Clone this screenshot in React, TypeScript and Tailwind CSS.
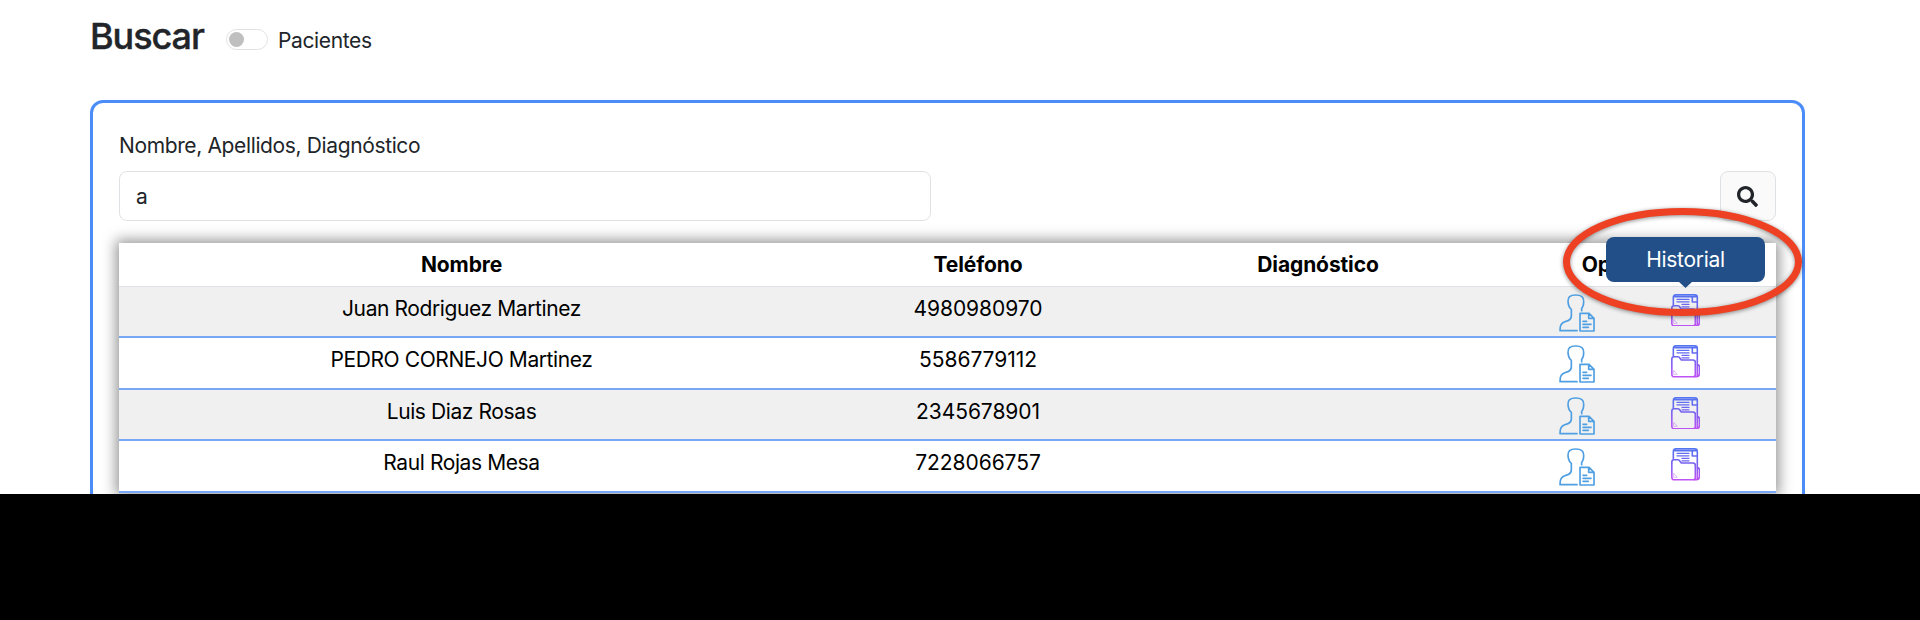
import { FaSearch } from "react-icons/fa";

const patients = [
  { name: "Juan Rodriguez Martinez", phone: "4980980970" },
  { name: "PEDRO CORNEJO Martinez", phone: "5586779112" },
  { name: "Luis Diaz Rosas", phone: "2345678901" },
  { name: "Raul Rojas Mesa", phone: "7228066757" },
];

const columns = "grid grid-cols-[685px_348px_332px_292px]";

function PatientIcon() {
  return (
    <svg viewBox="0 0 110 114" className="h-[38px] w-[36.7px]" fill="none" stroke="#4f9fe2" strokeWidth="5" strokeLinecap="round" strokeLinejoin="round">
      <path d="M68 50 V43 C74 37 74 30 74 22 C75 9 67 3 50 3 C33 3 26 10 27 23 C28 34 31 42 37 46 V66 C37 74 34 77 27 80 C14 84 6 87 4 98 L3 110 H54" />
      <path d="M63 58 H90 L105 73 V111 H63 Z M89 58 V73 H105 M72 82 H83 M72 91 H96 M72 100 H88" />
    </svg>
  );
}

function HistoryIcon({ id }: { id: string }) {
  return (
    <svg viewBox="0 0 88 98" className="h-[32.7px] w-[29.3px]" fill="none" stroke={`url(#${id})`} strokeWidth="4.8" strokeLinecap="round" strokeLinejoin="round">
      <defs>
        <linearGradient id={id} gradientUnits="userSpaceOnUse" x1="0" y1="0" x2="0" y2="98">
          <stop offset="0" stopColor="#5375f2" />
          <stop offset="0.45" stopColor="#7461ef" />
          <stop offset="1" stopColor="#c352f5" />
        </linearGradient>
      </defs>
      <path d="M7 33 V11 Q7 2.5 15 2.5 H71 Q79 2.5 79 10 V57 M12 8 H76 M64 9 V24 H79" />
      <path d="M18 16 H54 M18 23.5 H54 M33 31 H54 M33 38.5 H54" strokeWidth="4" />
      <path d="M9 35 H21 Q25 35 27 40 L31 45 H66 Q73 45 73 52 V89 Q73 95.5 66 95.5 H10 Q2.5 95.5 2.5 88 V42 Q2.5 35 9 35 Z" />
      <path d="M79 59 Q85.5 59 85.5 66 V85 Q85.5 95 77 95 H70 M79 59 V92" />
      <path d="M9 77 L19 88 H9 Z" strokeWidth="2" opacity="0.6" />
    </svg>
  );
}

export default function App() {
  return (
    <div className="h-[620px] w-[1920px] overflow-hidden bg-black font-['Inter','Liberation_Sans',sans-serif] text-[21px] text-[#212529]">
      <div className="h-[494px] overflow-hidden bg-white">
        <header className="flex h-[100px] items-start pl-[90px]">
          <h1 className="mt-[14px] w-[136px] text-[36px] leading-[44px] font-medium tracking-[-1.05px] [-webkit-text-stroke:0.4px_#212529]">Buscar</h1>
          <div className="mt-[29px] flex h-[21px] w-[42px] items-center rounded-full border border-[#dfe2e5] pl-[2px]">
            <span className="size-[15px] rounded-full bg-[#bfbfbf]" />
          </div>
          <span className="mt-[28px] ml-[10px] leading-[26px] tracking-[-0.37px]">Pacientes</span>
        </header>

        <main className="mx-[90px] h-[440px] w-[1715px] rounded-t-[13px] border-[3px] border-[#4a8cf8] px-[26px]">
          <label className="block pt-[30px] leading-[26px] tracking-[-0.37px]">Nombre, Apellidos, Diagnóstico</label>
          <div className="mt-[12px] flex items-center justify-between">
            <div className="flex h-[50px] w-[812px] items-center rounded-[8px] border border-[#dfe2e5] px-[16px] pt-px">a</div>
            <button className="flex h-[50px] w-[56px] items-center justify-center rounded-[8px] border border-[#dfe2e5] bg-[#fafafb] pr-px">
              <FaSearch size={21} />
            </button>
          </div>

          <div className="relative mt-[22px] w-[1657px] bg-white text-center text-black shadow-[0_0_13px_3px_rgba(0,0,0,0.42)]">
            <div className={`${columns} h-[43.5px] items-center border-b border-[#dee2e6] font-bold tracking-[-0.12px]`}>
              <span>Nombre</span>
              <span>Teléfono</span>
              <span>Diagnóstico</span>
              <span>Opciones</span>
            </div>
            {patients.map((p, i) => (
              <div key={p.phone} className={`${columns} h-[51.5px] border-b-2 border-[#78a8f5] odd:bg-white even:bg-[#f0f0f0]`}>
                <span className="pt-[9px] leading-[26px] tracking-[-0.4px]">{p.name}</span>
                <span className="pt-[9px] leading-[26px] tracking-[-0.05px]">{p.phone}</span>
                <span />
                <span className="flex gap-[75.5px] pt-[7px] pl-[75px]">
                  <PatientIcon />
                  <HistoryIcon id={`folder-${i}`} />
                </span>
              </div>
            ))}

            <div className="absolute top-[-6px] left-[1487px] flex h-[45px] w-[159px] items-center justify-center rounded-[8px] bg-[#224f88] tracking-[-0.3px] text-white">
              Historial
              <svg className="absolute top-[44px] left-[72px]" width="15" height="8" viewBox="0 0 15 8">
                <path d="M0 0H15L7.5 7Z" fill="#224f88" />
              </svg>
            </div>
            <svg className="absolute top-[-45px] left-[1434px] drop-shadow-[0_1px_2px_rgba(0,0,0,0.45)]" width="260" height="130" viewBox="0 0 260 130">
              <ellipse cx="129.5" cy="64" rx="116" ry="50.5" fill="none" stroke="#ee4023" strokeWidth="7" />
            </svg>
          </div>
        </main>
      </div>
    </div>
  );
}
